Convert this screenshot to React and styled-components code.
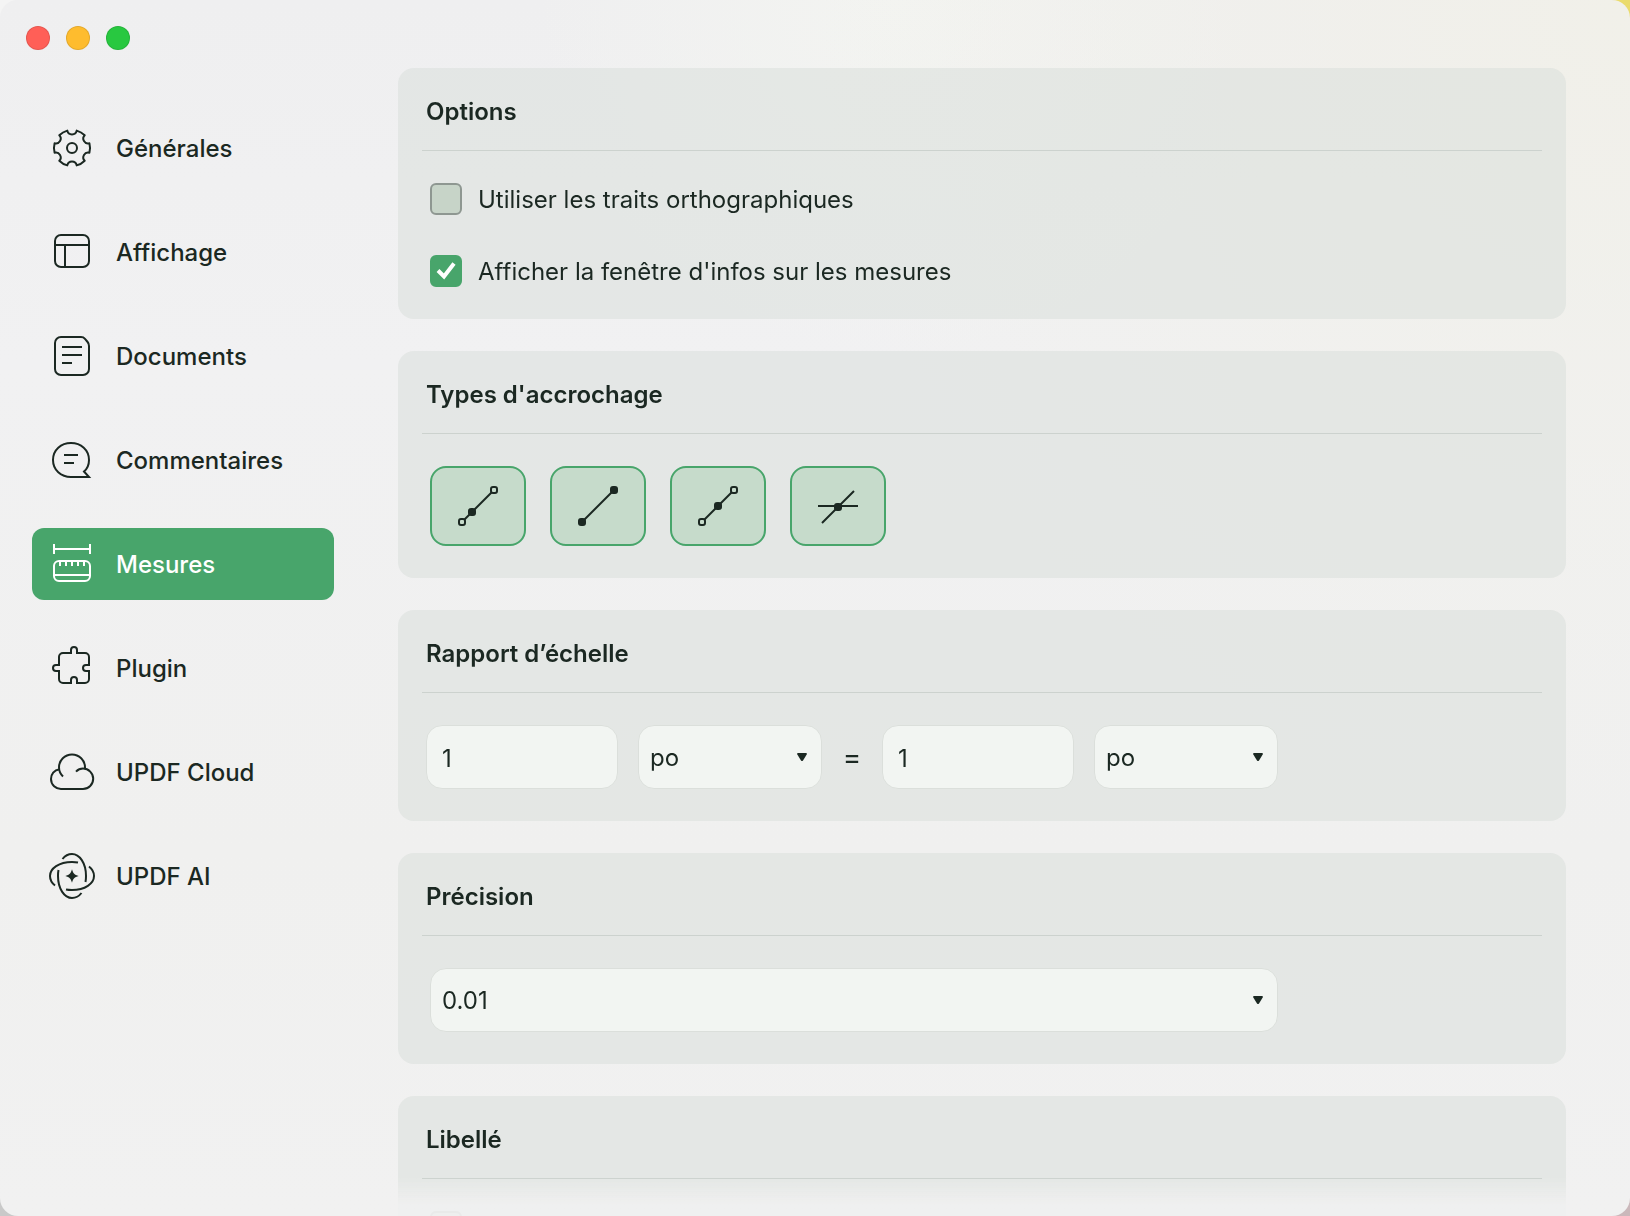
import React, { useId, useState } from 'react'

import styled, { createGlobalStyle } from 'styled-components'

const GlobalStyle = createGlobalStyle`
:root {
  --text: #1b2822;
  --green: #48a56b;
  --card: rgba(216, 222, 218, 0.5);
  --field: #f2f5f2;
}

*, *::before, *::after {
  box-sizing: border-box;
}

body {
  margin: 0;
  background:
    radial-gradient(circle at 100% 0, #eadb6c 40px, transparent 41px),
    radial-gradient(circle at 100% 100%, #cbb8bb 40px, transparent 41px),
    radial-gradient(circle at 0 100%, #c9c9c9 40px, transparent 41px),
    #f4f4f4;
  color: var(--text);
  font-family: Inter, "Liberation Sans", sans-serif;
  font-size: 24px;
  line-height: 32px;
}

button, input, select {
  margin: 0;
  color: inherit;
  font: inherit;
}
`;

const Window = styled.div`
display: flex;
flex-direction: column;
height: 100vh;
overflow: hidden;
border-radius: 18px;
background:
  radial-gradient(circle at 100% 0, #f1f0e9, rgba(241, 240, 233, 0) 40%),
  radial-gradient(circle at 55% 0, #f3f4f1, rgba(243, 244, 241, 0) 24%),
  linear-gradient(#efeff0, #f1f1f2 30%, #f0f0ef 70%, #f1f1f1);
`;

const TitleBar = styled.header`
display: flex;
flex: none;
gap: 16px;
height: 68px;
padding: 26px;
`;

const WindowButton = styled.button`
flex: none;
width: 24px;
height: 24px;
padding: 0;
border: 1px solid rgba(0, 0, 0, 0.1);
border-radius: 50%;
background: ${({ $color }) => $color};
`;

const Content = styled.div`
display: flex;
flex: 1;
min-height: 0;
`;

const Sidebar = styled.nav`
display: flex;
flex-direction: column;
flex: none;
gap: 32px;
width: 366px;
padding: 44px 32px;
`;

const NavItem = styled.a`
display: flex;
align-items: center;
gap: 20px;
height: 72px;
padding: 0 16px;
border-radius: 12px;
background: ${({ $active }) => ($active ? 'var(--green)' : 'transparent')};
color: ${({ $active }) => ($active ? '#fff' : 'inherit')};
font-weight: 500;
text-decoration: none;
`;

const Text = styled.span`
padding-top: 2px;
`;

const Icon = styled.svg`
display: block;
flex: none;
width: 48px;
height: 48px;
fill: none;
stroke: currentColor;
stroke-width: 2px;

.solid {
  fill: currentColor;
  stroke: none;
}
`;

const Panels = styled.main`
display: flex;
flex: 1;
flex-direction: column;
gap: 32px;
min-width: 0;
padding: 0 64px 32px 32px;
overflow-y: auto;
scrollbar-width: none;
mask-image: linear-gradient(to top, rgba(0, 0, 0, 0.08) 12px, #000 38px);
`;

const Card = styled.section`
flex: none;
padding: 0 24px;
border-radius: 16px;
background: var(--card);
`;

const CardTitle = styled.h2`
height: 83px;
margin: 0;
padding: 28px 4px 0;
border-bottom: 1px solid #ccd2ce;
font-size: 24px;
font-weight: 600;
line-height: 32px;
`;

const CardBody = styled.div`
display: flex;
flex-direction: ${({ $column }) => ($column ? 'column' : 'row')};
align-items: flex-start;
gap: ${({ $gap }) => $gap}px;
padding: 32px ${({ $inset }) => $inset}px;
`;

const CheckLabel = styled.label`
display: flex;
align-items: center;
gap: 16px;
height: 32px;
`;

// the input and its tick share one grid cell
const Stack = styled.span`
display: grid;
flex: none;
width: ${({ $width }) => $width};
max-width: 100%;

> * {
  grid-area: 1 / 1;
}

> svg {
  pointer-events: none;
}
`;

const CheckInput = styled.input`
appearance: none;
width: 32px;
height: 32px;
border: 2px solid #8e9791;
border-radius: 6px;
background: #c7d4c8;

&:checked {
  border-color: var(--green);
  background: var(--green);
}
`;

const Tick = styled.svg`
width: 32px;
height: 32px;
fill: none;
stroke: #fff;
stroke-width: 4px;
`;

const SnapButton = styled.button`
display: grid;
place-items: center;
width: 96px;
height: 80px;
padding: 0;
border: 2px solid ${({ $on }) => ($on ? 'var(--green)' : '#8e9791')};
border-radius: 16px;
background: ${({ $on }) => ($on ? '#c6dbcb' : 'transparent')};
`;

const Field = styled.input`
width: 192px;
height: 64px;
padding: 2px 15px 0;
border: 1px solid #dbdfdb;
border-radius: 16px;
background: var(--field);
`;

const SelectBox = styled.select`
appearance: none;
width: 100%;
height: 64px;
padding: 2px 36px 0 11px;
border: 1px solid #dbdfdb;
border-radius: 16px;
background: var(--field);
`;

const Arrow = styled.svg`
align-self: center;
justify-self: end;
width: 10px;
height: 8px;
margin-right: 15px;
fill: currentColor;
`;

const Equals = styled.span`
width: 20px;
font-size: 28px;
line-height: 64px;
text-align: center;
`;

const navItems = [
  {
    label: 'Générales',
    icon: (
      <>
        <path
          strokeLinejoin="round"
          d="M41.4 28.7A4.8 4.8 0 0 0 36.7 36.7A18 18 0 0 1 28.7 41.4A4.8 4.8 0 0 0 19.3 41.4A18 18 0 0 1 11.3 36.7A4.8 4.8 0 0 0 6.6 28.7A18 18 0 0 1 6.6 19.3A4.8 4.8 0 0 0 11.3 11.3A18 18 0 0 1 19.3 6.6A4.8 4.8 0 0 0 28.7 6.6A18 18 0 0 1 36.7 11.3A4.8 4.8 0 0 0 41.4 19.3A18 18 0 0 1 41.4 28.7z"
        />
        <circle cx="24" cy="24" r="5" />
      </>
    ),
  },
  {
    label: 'Affichage',
    icon: (
      <>
        <rect x="7" y="7" width="34" height="32" rx="6" />
        <path d="M7 17h34M17 17v22" />
      </>
    ),
  },
  {
    label: 'Documents',
    icon: (
      <path d="M13 5h20c2 0 3 .6 4 1.800l2.600 3.200c1 1.200 1.400 2 1.400 4V37a6 6 0 0 1-6 6H13a6 6 0 0 1-6-6V11a6 6 0 0 1 6-6zM14 15h20M14 23h20M14 31h10" />
    ),
  },
  {
    label: 'Commentaires',
    icon: (
      <path d="M41 41H23C13 41 5 34 5 24S13 7 23 7s18 7 18 17c0 5-2 9-5 11.500L41 41zM16 19h14M16 27h10" />
    ),
  },
  {
    label: 'Mesures',
    icon: (
      <>
        <path d="M6 4v10M42 4v10M6 9h36" />
        <rect x="6" y="21" width="36" height="20" rx="5" />
        <path d="M6 35h36M12 21v5M18 21v5M24 21v5M30 21v5M36 21v5" />
      </>
    ),
  },
  {
    label: 'Plugin',
    icon: (
      <path d="M15 9h8V6a3 3 0 0 1 6 0v3h8a4 4 0 0 1 4 4v8h-3a3 3 0 0 0 0 6h3v8a4 4 0 0 1-4 4h-8v-3a3 3 0 0 0-6 0v3h-8a4 4 0 0 1-4-4v-8H8a3 3 0 0 1 0-6h3v-8a4 4 0 0 1 4-4z" />
    ),
  },
  {
    label: 'UPDF Cloud',
    icon: (
      <>
        <path d="M15 28.500c-2.500-2.500-4-5-4-9a13 13 0 0 1 26 0v1.500" />
        <path d="M11.500 21.300C6 22 3 26.500 3 31a10 10 0 0 0 10.500 10h21.500a10.200 10.200 0 0 0 0-20.400c-3 0-5 1-7 3" />
      </>
    ),
  },
  {
    label: 'UPDF AI',
    icon: (
      <>
        {[0, 90, 180, 270].map(angle => (
          <path
            key={angle}
            d="M14.500 7C17 3.800 20 2 24 2c7.500 0 14 9 14 22 0 2-.1 4-.5 6"
            transform={`rotate(${angle} 24 24)`}
          />
        ))}
        <path
          className="solid"
          d="M24 17.300c1.300 4.300 2.400 5.400 6.700 6.700-4.300 1.300-5.400 2.400-6.700 6.700-1.300-4.300-2.400-5.400-6.700-6.700 4.300-1.300 5.400-2.400 6.700-6.700z"
        />
      </>
    ),
  },
]

const snapTypes = [
  {
    label: 'Trajet',
    icon: (
      <>
        <path d="M10 38L38 10" />
        <rect x="37" y="5" width="6" height="6" rx="2" />
        <rect x="5" y="37" width="6" height="6" rx="2" />
        <rect className="solid" x="14" y="26" width="8" height="8" rx="3" />
      </>
    ),
  },
  {
    label: 'Extrémités',
    icon: (
      <>
        <path d="M8 40L40 8" />
        <rect className="solid" x="36" y="4" width="8" height="8" rx="3" />
        <rect className="solid" x="4" y="36" width="8" height="8" rx="3" />
      </>
    ),
  },
  {
    label: 'Points centraux',
    icon: (
      <>
        <path d="M10 38L38 10" />
        <rect x="37" y="5" width="6" height="6" rx="2" />
        <rect x="5" y="37" width="6" height="6" rx="2" />
        <rect className="solid" x="20" y="20" width="8" height="8" rx="3" />
      </>
    ),
  },
  {
    label: 'Intersections',
    icon: (
      <>
        <path d="M4 24h40M8 41L40 9" />
        <rect className="solid" x="20" y="21" width="8" height="8" rx="3" />
      </>
    ),
  },
]

const Panel = ({ title, titleId, children, ...body }) => (
  <Card aria-labelledby={titleId}>
    <CardTitle id={titleId}>{title}</CardTitle>
    <CardBody {...body}>{children}</CardBody>
  </Card>
)

const Checkbox = ({ children, defaultChecked = false, ...rest }) => {
  const [checked, setChecked] = useState(defaultChecked)

  return (
    <CheckLabel>
      <Stack $width="32px">
        <CheckInput
          type="checkbox"
          checked={checked}
          onChange={e => setChecked(e.target.checked)}
          {...rest}
        />
        {checked && (
          <Tick viewBox="0 0 32 32" aria-hidden="true">
            <path d="M8 15.500l6 6L24 8.500" />
          </Tick>
        )}
      </Stack>
      {children && <Text>{children}</Text>}
    </CheckLabel>
  )
}

const Select = ({ options, width, ...rest }) => (
  <Stack $width={width}>
    <SelectBox {...rest}>
      {options.map(option => <option key={option}>{option}</option>)}
    </SelectBox>
    <Arrow viewBox="0 0 10 8" aria-hidden="true">
      <path d="M1 0h8q1.300.3.7 1.500L6 7.500q-1 1-2 0L.3 1.500Q-.3.3 1 0z" />
    </Arrow>
  </Stack>
)

const SnapToggle = ({ label, icon }) => {
  const [on, setOn] = useState(true)

  return (
    <SnapButton
      type="button"
      $on={on}
      aria-pressed={on}
      aria-label={label}
      onClick={() => setOn(!on)}
    >
      <Icon viewBox="0 0 48 48" aria-hidden="true">{icon}</Icon>
    </SnapButton>
  )
}

export default function App() {
  const [active, setActive] = useState('Mesures')
  const id = useId()

  return (
    <>
      <GlobalStyle />
      <Window>
        <TitleBar>
          <WindowButton type="button" $color="#ff5f57" aria-label="Fermer" />
          <WindowButton type="button" $color="#febc2e" aria-label="Réduire" />
          <WindowButton type="button" $color="#28c840" aria-label="Agrandir" />
        </TitleBar>
        <Content>
          <Sidebar>
            {navItems.map(({ label, icon }) => (
              <NavItem
                key={label}
                href="#"
                $active={label === active}
                aria-current={label === active ? 'page' : undefined}
                onClick={() => setActive(label)}
              >
                <Icon viewBox="0 0 48 48" aria-hidden="true">{icon}</Icon>
                <Text>{label}</Text>
              </NavItem>
            ))}
          </Sidebar>
          <Panels>
            <Panel title="Options" titleId={`${id}options`} $column $gap={40} $inset={8}>
              <Checkbox>Utiliser les traits orthographiques</Checkbox>
              <Checkbox defaultChecked>Afficher la fenêtre d'infos sur les mesures</Checkbox>
            </Panel>
            <Panel title="Types d'accrochage" titleId={`${id}snap`} $gap={24} $inset={8}>
              {snapTypes.map(snap => <SnapToggle key={snap.label} {...snap} />)}
            </Panel>
            <Panel title="Rapport d’échelle" titleId={`${id}scale`} $gap={20} $inset={4}>
              <Field defaultValue="1" aria-label="Valeur sur la page" />
              <Select options={['po', 'cm', 'mm']} width="184px" aria-label="Unité sur la page" />
              <Equals>=</Equals>
              <Field defaultValue="1" aria-label="Valeur réelle" />
              <Select options={['po', 'cm', 'mm']} width="184px" aria-label="Unité réelle" />
            </Panel>
            <Panel title="Précision" titleId={`${id}precision`} $gap={24} $inset={8}>
              <Select
                options={['0.01', '0.001', '0.0001']}
                width="848px"
                aria-labelledby={`${id}precision`}
              />
            </Panel>
            <Panel title="Libellé" titleId={`${id}caption`} $gap={24} $inset={8}>
              <Checkbox aria-labelledby={`${id}caption`} />
            </Panel>
          </Panels>
        </Content>
      </Window>
    </>
  )
}
